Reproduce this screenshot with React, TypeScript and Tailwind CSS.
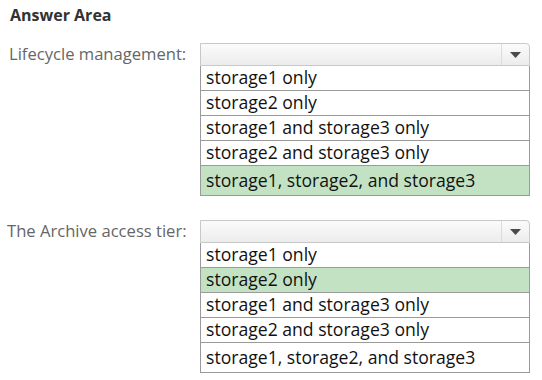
import React from "react";

const options = [
  "storage1 only",
  "storage2 only",
  "storage1 and storage3 only",
  "storage2 and storage3 only",
  "storage1, storage2, and storage3",
];

function Dropdown({ selected }: { selected: number }) {
  return (
    <div className="w-[330px]">
      <div className="flex h-[23px] rounded-tr-[4px] border border-[#c8c8c8] bg-gradient-to-b from-[#fbfbfb] to-[#ececec]">
        <div className="flex-1" />
        <div className="flex w-[28px] items-center justify-center border-l border-[#dcdcdc]">
          <svg width="11" height="6" viewBox="0 0 11 6">
            <path d="M0 0 H11 L5.5 6 Z" fill="#4a4a4a" />
          </svg>
        </div>
      </div>
      <div className="border-x border-b border-[#9a9a9a]">
        {options.map((o, i) => (
          <div
            key={i}
            className={`flex items-center pl-[5px] text-[17.6px] leading-none text-[#111] ${
              i === options.length - 1 ? "h-[29px]" : "h-[25px] border-b border-[#9a9a9a]"
            } ${i === selected ? "bg-[#c3e2c3]" : "bg-white"}`}
          >
            {o}
          </div>
        ))}
      </div>
    </div>
  );
}

export default function App() {
  return (
    <div
      className="h-[380px] w-[542px] bg-white"
      style={{ fontFamily: '"Open Sans", "Noto Sans", sans-serif' }}
    >
      <div className="pl-[10px] pt-[5px] text-[16px] font-bold leading-[20px] text-[#333]">
        Answer Area
      </div>
      <div className="mt-[18px] flex">
        <div className="w-[200px] pl-[9px] pt-[1px] text-[16.6px] leading-[20px] text-[#666]">
          Lifecycle management:
        </div>
        <Dropdown selected={4} />
      </div>
      <div className="mt-[24px] flex">
        <div className="w-[200px] pl-[7px] pt-[1px] text-[16.6px] leading-[20px] text-[#666]">
          The Archive access tier:
        </div>
        <Dropdown selected={1} />
      </div>
    </div>
  );
}
